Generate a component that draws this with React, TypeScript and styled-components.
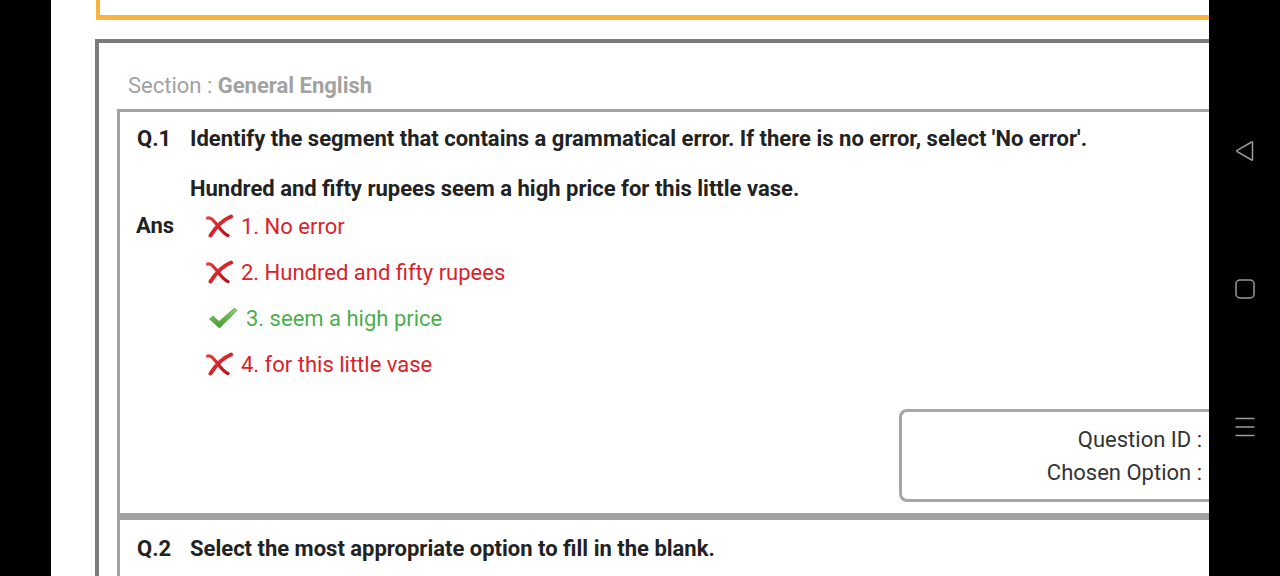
import React from "react";
import styled, { createGlobalStyle } from "styled-components";

const GlobalStyle = createGlobalStyle`
  html, body { margin: 0; padding: 0; background: #000; }
  body { font-family: Roboto, "Noto Sans", Arial, sans-serif; }
  * { box-sizing: border-box; }
`;

const Screen = styled.div`
  display: flex;
  width: 1280px;
  height: 576px;
  overflow: hidden;
  background: #000;
`;

const LeftStrip = styled.div`
  width: 51px;
  flex: none;
  background: #000;
`;

const Main = styled.div`
  width: 1158px;
  flex: none;
  background: #fff;
  overflow: hidden;
`;

const Page = styled.div`
  width: 1190px;
  padding-left: 44px;
`;

const OrangeBox = styled.div`
  height: 20px;
  margin-left: 1px;
  border: 4px solid #fbb23f;
  border-top: none;
  border-bottom-width: 5px;
`;

const OuterBox = styled.div`
  margin-top: 19px;
  border: 4px solid #7b7b7b;
  border-bottom: none;
  padding-top: 31px;
  height: 640px;
`;

const SectionTitle = styled.div`
  padding-left: 29px;
  font-size: 22px;
  line-height: 24px;
  color: #a2a2a2;
  margin-bottom: 11px;
  b { font-weight: 700; }
`;

const QuestionBox = styled.div<{ $first?: boolean }>`
  margin: 0 18px;
  border: 3px solid #a3a3a3;
  border-bottom-width: ${(p) => (p.$first ? "4px" : "3px")};
  padding: ${(p) => (p.$first ? "14px 0 11px 17px" : "16px 0 40px 17px")};
  display: flex;
  flex-direction: column;
`;

const QGrid = styled.div`
  display: grid;
  grid-template-columns: 53px 1fr;
  row-gap: 24px;
  color: #222;
  font-size: 22px;
  font-weight: 700;
  line-height: 26px;
`;

const AnsLabel = styled.div`
  font-size: 22px;
  font-weight: 700;
  color: #222;
  line-height: 46px;
  margin-left: -1px;
`;

const AnsRow = styled.div`
  display: grid;
  grid-template-columns: 53px 1fr;
  margin-top: 1px;
`;

const OptionList = styled.div`
  display: flex;
  flex-direction: column;
`;

const Option = styled.div<{ $correct?: boolean }>`
  height: 46px;
  display: flex;
  align-items: center;
  font-size: 22px;
  color: ${(p) => (p.$correct ? "#4cae4f" : "#d8232a")};
  padding-left: ${(p) => (p.$correct ? "18px" : "15px")};
  gap: 8px;
`;

const InfoBox = styled.div`
  align-self: flex-end;
  width: 317px;
  margin-top: 22px;
  border: 3px solid #a6a6a6;
  border-right: none;
  border-radius: 8px 0 0 8px;
  padding: 11px 14px 10px 0;
  text-align: right;
  font-size: 22px;
  line-height: 33px;
  color: #333;
`;

const NavBar = styled.div`
  width: 71px;
  flex: none;
  background: #000;
  display: flex;
  flex-direction: column;
  align-items: center;
  padding-top: 140px;
  gap: 116px;
`;

const NavIcon = styled.svg`
  display: block;
  width: 22px;
  height: 22px;
`;

const Cross = () => (
  <svg width="28" height="24" viewBox="0 0 28 24">
    <defs>
      <linearGradient id="rg" x1="0" y1="0" x2="1" y2="1">
        <stop offset="0" stopColor="#f23a3a" />
        <stop offset="1" stopColor="#b80f18" />
      </linearGradient>
    </defs>
    <path d="M26 2.5 C 20 5, 12 11, 5.5 21.5" stroke="url(#rg)" strokeWidth="4" strokeLinecap="round" fill="none" />
    <path d="M2.5 4 C 6 3, 8 6, 13 12 C 16 16, 19 20, 23 21.5" stroke="url(#rg)" strokeWidth="3.2" strokeLinecap="round" fill="none" />
  </svg>
);

const Check = () => (
  <svg width="30" height="24" viewBox="0 0 30 24">
    <defs>
      <linearGradient id="gg" x1="0" y1="0" x2="0" y2="1">
        <stop offset="0" stopColor="#8fd16a" />
        <stop offset="1" stopColor="#3e9a2e" />
      </linearGradient>
    </defs>
    <path d="M1.5 13 L5 10 L11 15.5 L26.5 2 L29 4.5 L11.5 22 Z" fill="url(#gg)" stroke="#3f8f2f" strokeWidth="0.6" strokeLinejoin="round" />
  </svg>
);

export default function App() {
  return (
    <>
      <GlobalStyle />
      <Screen>
        <LeftStrip />
        <Main>
          <Page>
            <OrangeBox />
            <OuterBox>
              <SectionTitle>
                Section : <b>General English</b>
              </SectionTitle>
              <QuestionBox $first>
                <QGrid>
                  <div>Q.1</div>
                  <div>
                    Identify the segment that contains a grammatical error. If there is no error, select 'No error'.
                  </div>
                  <div />
                  <div>Hundred and fifty rupees seem a high price for this little vase.</div>
                </QGrid>
                <AnsRow>
                  <AnsLabel>Ans</AnsLabel>
                  <OptionList>
                    <Option>
                      <Cross />
                      1. No error
                    </Option>
                    <Option>
                      <Cross />
                      2. Hundred and fifty rupees
                    </Option>
                    <Option $correct>
                      <Check />
                      3. seem a high price
                    </Option>
                    <Option>
                      <Cross />
                      4. for this little vase
                    </Option>
                  </OptionList>
                </AnsRow>
                <InfoBox>
                  <div>Question ID :</div>
                  <div>Chosen Option :</div>
                </InfoBox>
              </QuestionBox>
              <QuestionBox>
                <QGrid>
                  <div>Q.2</div>
                  <div>Select the most appropriate option to fill in the blank.</div>
                </QGrid>
              </QuestionBox>
            </OuterBox>
          </Page>
        </Main>
        <NavBar>
          <NavIcon viewBox="0 0 22 22">
            <path d="M18.5 2.5 L18.5 19.5 Q18.5 20.5 17.6 20 L3.2 11.6 Q2.4 11 3.2 10.4 L17.6 2 Q18.5 1.5 18.5 2.5 Z" fill="none" stroke="#9a9a9a" strokeWidth="1.5" />
          </NavIcon>
          <NavIcon viewBox="0 0 22 22">
            <rect x="2" y="2" width="18" height="18" rx="4" fill="none" stroke="#9a9a9a" strokeWidth="1.5" />
          </NavIcon>
          <NavIcon viewBox="0 0 22 22">
            <path d="M1.5 2.5 H20.5 M1.5 11 H20.5 M1.5 19.5 H20.5" stroke="#9a9a9a" strokeWidth="1.3" />
          </NavIcon>
        </NavBar>
      </Screen>
    </>
  );
}
